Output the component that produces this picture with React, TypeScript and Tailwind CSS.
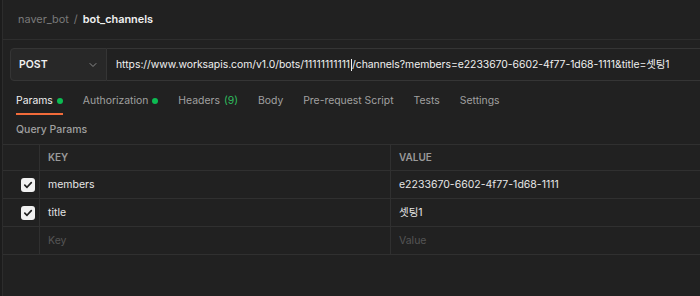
import React from "react";

const TABS = [
  { label: "Params", dot: true, active: true },
  { label: "Authorization", dot: true },
  { label: "Headers", count: "(9)" },
  { label: "Body" },
  { label: "Pre-request Script" },
  { label: "Tests" },
  { label: "Settings" },
];

function Check() {
  return (
    <span className="flex h-[14px] w-[14px] items-center justify-center rounded-[3px] bg-[#f2f2f2]">
      <svg width="10" height="10" viewBox="0 0 10 10" fill="none">
        <path d="M1.8 5.2 4 7.3 8.3 2.6" stroke="#212121" strokeWidth="1.7" strokeLinecap="round" strokeLinejoin="round" />
      </svg>
    </span>
  );
}

function Row({ k, v, checked, placeholder }: { k: string; v: string; checked?: boolean; placeholder?: boolean }) {
  const tone = placeholder ? "text-[#555555]" : "text-[#e6e6e6]";
  return (
    <div className="flex h-[28px] border-b border-[#303030]">
      <div className="flex w-[37px] items-center justify-end border-r border-[#303030] pr-[4px]">
        {checked && <Check />}
      </div>
      <div className={`flex w-[351px] items-center border-r border-[#303030] pl-[8px] ${tone}`}>{k}</div>
      <div className={`flex flex-1 items-center pl-[8px] ${tone}`}>{v}</div>
    </div>
  );
}

export default function App() {
  return (
    <div
      className="flex h-[296px] w-[700px] overflow-hidden bg-[#212121] text-[10.5px]"
      style={{ fontFamily: 'Inter, "Noto Sans CJK KR", sans-serif' }}
    >
      {/* left edge */}
      <div className="w-[3px] border-r border-[#2c2c2c] bg-[#1c1c1c]" />

      <div className="flex min-w-0 flex-1 flex-col">
        {/* Breadcrumb */}
        <div className="flex h-[40px] items-center gap-[5px] border-b border-[#2e2e2e] pl-[15px] text-[10.9px]">
          <span className="text-[#7a7a7a]">naver_bot</span>
          <span className="text-[#7a7a7a]">/</span>
          <span className="font-semibold text-[#f0f0f0]">bot_channels</span>
        </div>

        {/* Request bar */}
        <div className="flex pl-[7px] pt-[8px]">
          <div className="flex h-[33px] w-[97px] shrink-0 items-center justify-between rounded-l-[4px] border border-[#353535] bg-[#282828] pl-[8px] pr-[8px]">
            <span className="text-[10.5px] font-semibold text-[#f0f0f0]">POST</span>
            <svg width="10" height="10" viewBox="0 0 10 10" fill="none">
              <path d="M2 3.5 5 6.5 8 3.5" stroke="#8a8a8a" strokeWidth="1" strokeLinecap="round" strokeLinejoin="round" />
            </svg>
          </div>
          <div className="flex h-[33px] flex-1 items-center whitespace-nowrap border-y border-[#353535] bg-[#212121] pl-[9px] text-[10.4px] tracking-[-0.03px] text-[#f0f0f0]">
            https://www.worksapis.com/v1.0/bots/11111111111<span className="mx-[0.5px] inline-block h-[12px] w-px bg-[#f0f0f0]" />/channels?members=e2233670-6602-4f77-1d68-1111&amp;title=셋팅1
          </div>
        </div>

        {/* Tabs */}
        <div className="flex h-[34px] items-stretch gap-[20px] pl-[13px] pt-[8px] text-[10.4px]">
          {TABS.map((t) => (
            <div
              key={t.label}
              className={`flex items-center gap-[4px] border-b-2 ${t.active ? "border-[#f26b3a] text-[#f0f0f0]" : "border-transparent text-[#a0a0a0]"}`}
            >
              <span>{t.label}</span>
              {t.count && <span className="text-[#2fbf5f]">{t.count}</span>}
              {t.dot && <span className="h-[6px] w-[6px] rounded-full bg-[#0cbb52]" />}
            </div>
          ))}
        </div>

        {/* Query Params */}
        <div className="flex h-[29px] items-center pl-[13px] font-medium text-[#a0a0a0]">Query Params</div>

        <div className="border-t border-[#303030]">
          <div className="flex h-[26px] border-b border-[#303030] text-[10px] font-semibold text-[#9a9a9a]">
            <div className="w-[37px] border-r border-[#303030]" />
            <div className="flex w-[351px] items-center border-r border-[#303030] pl-[8px]">KEY</div>
            <div className="flex flex-1 items-center pl-[8px]">VALUE</div>
          </div>
          <Row k="members" v="e2233670-6602-4f77-1d68-1111" checked />
          <Row k="title" v="셋팅1" checked />
          <Row k="Key" v="Value" placeholder />
        </div>
      </div>
    </div>
  );
}
